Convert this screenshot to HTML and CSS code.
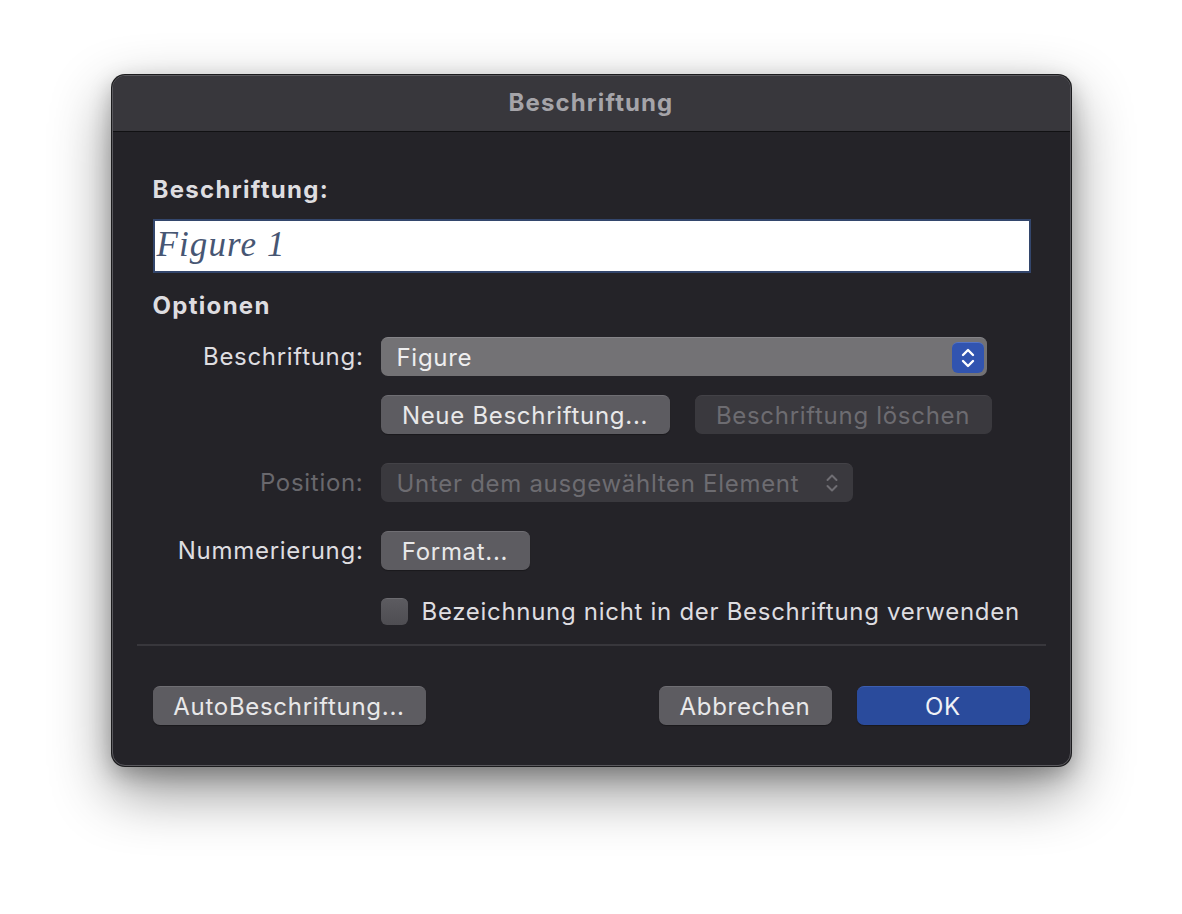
FILE: index.html
```html
<!DOCTYPE html>
<html lang="de">

<head>
    <meta charset="UTF-8">
    <meta name="viewport" content="width=device-width, initial-scale=1.0">
    <title>Beschriftung</title>
    <link rel="stylesheet" href="styles.css">
</head>

<body>
    <div class="window">
        <div class="titlebar">Beschriftung</div>
        <div class="content">
            <div class="heading caption-heading">Beschriftung:</div>
            <div class="caption-field">Figure 1</div>
            <div class="heading options-heading">Optionen</div>

            <div class="form">
                <!-- Zeile 1: Bezeichnung -->
                <div class="label">Beschriftung:</div>
                <div class="popup">
                    <span>Figure</span>
                    <span class="stepper">
                        <svg width="16" height="22" viewBox="0 0 16 22">
                            <path d="M3 8 L8 3 L13 8" fill="none" stroke="#fff" stroke-width="2.4" stroke-linecap="round" stroke-linejoin="round"/>
                            <path d="M3 14 L8 19 L13 14" fill="none" stroke="#fff" stroke-width="2.4" stroke-linecap="round" stroke-linejoin="round"/>
                        </svg>
                    </span>
                </div>

                <!-- Zeile 2: Buttons -->
                <div></div>
                <div class="btn-row">
                    <button class="btn new-btn">Neue Beschriftung...</button>
                    <button class="btn disabled delete-btn">Beschriftung löschen</button>
                </div>

                <!-- Zeile 3: Position (deaktiviert) -->
                <div class="label disabled-text position-label">Position:</div>
                <div class="popup disabled position-popup">
                    <span>Unter dem ausgewählten Element</span>
                    <svg class="chev" width="14" height="22" viewBox="0 0 14 22">
                        <path d="M2.5 8 L7 3.5 L11.5 8" fill="none" stroke="#6f6e73" stroke-width="2" stroke-linecap="round" stroke-linejoin="round"/>
                        <path d="M2.5 14 L7 18.5 L11.5 14" fill="none" stroke="#6f6e73" stroke-width="2" stroke-linecap="round" stroke-linejoin="round"/>
                    </svg>
                </div>

                <!-- Zeile 4: Nummerierung -->
                <div class="label number-label">Nummerierung:</div>
                <div class="number-row">
                    <button class="btn format-btn">Format...</button>
                </div>

                <!-- Zeile 5: Checkbox -->
                <div></div>
                <label class="check-row">
                    <span class="checkbox"></span>
                    <span>Bezeichnung nicht in der Beschriftung verwenden</span>
                </label>
            </div>
        </div>

        <div class="separator"></div>

        <div class="footer">
            <button class="btn auto-btn">AutoBeschriftung...</button>
            <div class="footer-right">
                <button class="btn cancel-btn">Abbrechen</button>
                <button class="btn primary ok-btn">OK</button>
            </div>
        </div>
    </div>
</body>

</html>
```

FILE: styles.css
```css
* {
    margin: 0;
    padding: 0;
    box-sizing: border-box;
}

body {
    background-color: #fff;
    font-family: Inter, "Liberation Sans", sans-serif;
    height: 100vh;
    overflow: hidden;
    display: flex;
    justify-content: center;
    align-items: flex-start;
    padding-top: 75px;
}

.window {
    width: 959px;
    height: 691px;
    flex: none;
    background: #242328;
    border: 1px solid #5a595e;
    border-radius: 13px;
    overflow: hidden;
    box-shadow: 0 0 0 1px #1c1c1e, 0 24px 60px rgba(0, 0, 0, 0.45), 0 8px 22px rgba(0, 0, 0, 0.25);
    display: flex;
    flex-direction: column;
}

.titlebar {
    height: 56px;
    flex: none;
    background: #38373c;
    border-bottom: 1px solid #111113;
    color: #a5a4a9;
    font-weight: 700;
    font-size: 24px;
    letter-spacing: 1.1px;
    text-align: center;
    line-height: 54px;
}

.content {
    padding: 0 39px 0 40px;
}

.heading {
    color: #dedde0;
    font-weight: 700;
    font-size: 24px;
    letter-spacing: 1.3px;
}

.caption-heading {
    margin-top: 44px;
    line-height: 28px;
}

.caption-field {
    margin-top: 15px;
    height: 54px;
    background: #fff;
    border: 2px solid #33466c;
    color: #475673;
    font-family: "Liberation Serif", serif;
    font-style: italic;
    font-size: 35px;
    letter-spacing: 1.1px;
    line-height: 47px;
    padding-left: 2px;
}

.options-heading {
    margin-top: 19px;
    line-height: 28px;
}

.form {
    display: grid;
    grid-template-columns: 211px 1fr;
    column-gap: 17px;
    margin-top: 17px;
    color: #dedde0;
    font-size: 24px;
    letter-spacing: 0.7px;
}

.label {
    text-align: right;
    height: 39px;
    line-height: 39px;
}

.disabled-text {
    color: #69686d;
}

.popup {
    width: 606px;
    height: 39px;
    border-radius: 7px;
    background: #737275;
    border-top: 1px solid #858488;
    display: flex;
    align-items: center;
    justify-content: space-between;
    padding: 0 3px 0 16px;
    color: #eeeeef;
}

.stepper {
    width: 32px;
    height: 31px;
    border-radius: 6px;
    background: #3154b0;
    border-top: 1px solid #5474c6;
    display: flex;
    align-items: center;
    justify-content: center;
}

.btn-row {
    display: flex;
    gap: 25px;
    margin-top: 19px;
}

.btn {
    font-family: Inter, "Liberation Sans", sans-serif;
    font-size: 24px;
    letter-spacing: 0.7px;
    height: 39px;
    border: none;
    border-top: 1px solid #6f6e73;
    border-radius: 7px;
    background: #5d5c61;
    color: #e8e8e9;
    padding: 0 6px;
    box-shadow: 0 1px 1px rgba(0, 0, 0, 0.3);
}

.btn.disabled {
    background: #3a393e;
    border-top: 1px solid #434247;
    color: #6d6c71;
    box-shadow: none;
}

.new-btn {
    width: 289px;
}

.delete-btn {
    width: 297px;
}

.position-label,
.position-popup {
    margin-top: 29px;
}

.popup.disabled {
    width: 472px;
    background: #3a393e;
    border-top: 1px solid #434247;
    color: #6d6c71;
    padding-right: 14px;
}

.number-label,
.number-row {
    margin-top: 29px;
}

.format-btn {
    width: 149px;
}

.check-row {
    grid-column: 2;
    display: flex;
    align-items: center;
    gap: 14px;
    margin-top: 27px;
    height: 28px;
}

.checkbox {
    width: 27px;
    height: 27px;
    flex: none;
    border-radius: 6px;
    background: linear-gradient(#5c5b60, #4e4d52);
    border-top: 1px solid #6c6b70;
}

.separator {
    height: 2px;
    flex: none;
    background: #38373c;
    margin: 19px 24px 0 24px;
}

.footer {
    display: flex;
    justify-content: space-between;
    padding: 0 40px 0 40px;
    margin-top: 40px;
}

.footer-right {
    display: flex;
    gap: 25px;
}

.auto-btn {
    width: 273px;
}

.cancel-btn {
    width: 173px;
}

.btn.primary {
    width: 173px;
    background: #2a4b9c;
    border-top: 1px solid #3d5eb0;
    color: #f0f2f7;
}
```
